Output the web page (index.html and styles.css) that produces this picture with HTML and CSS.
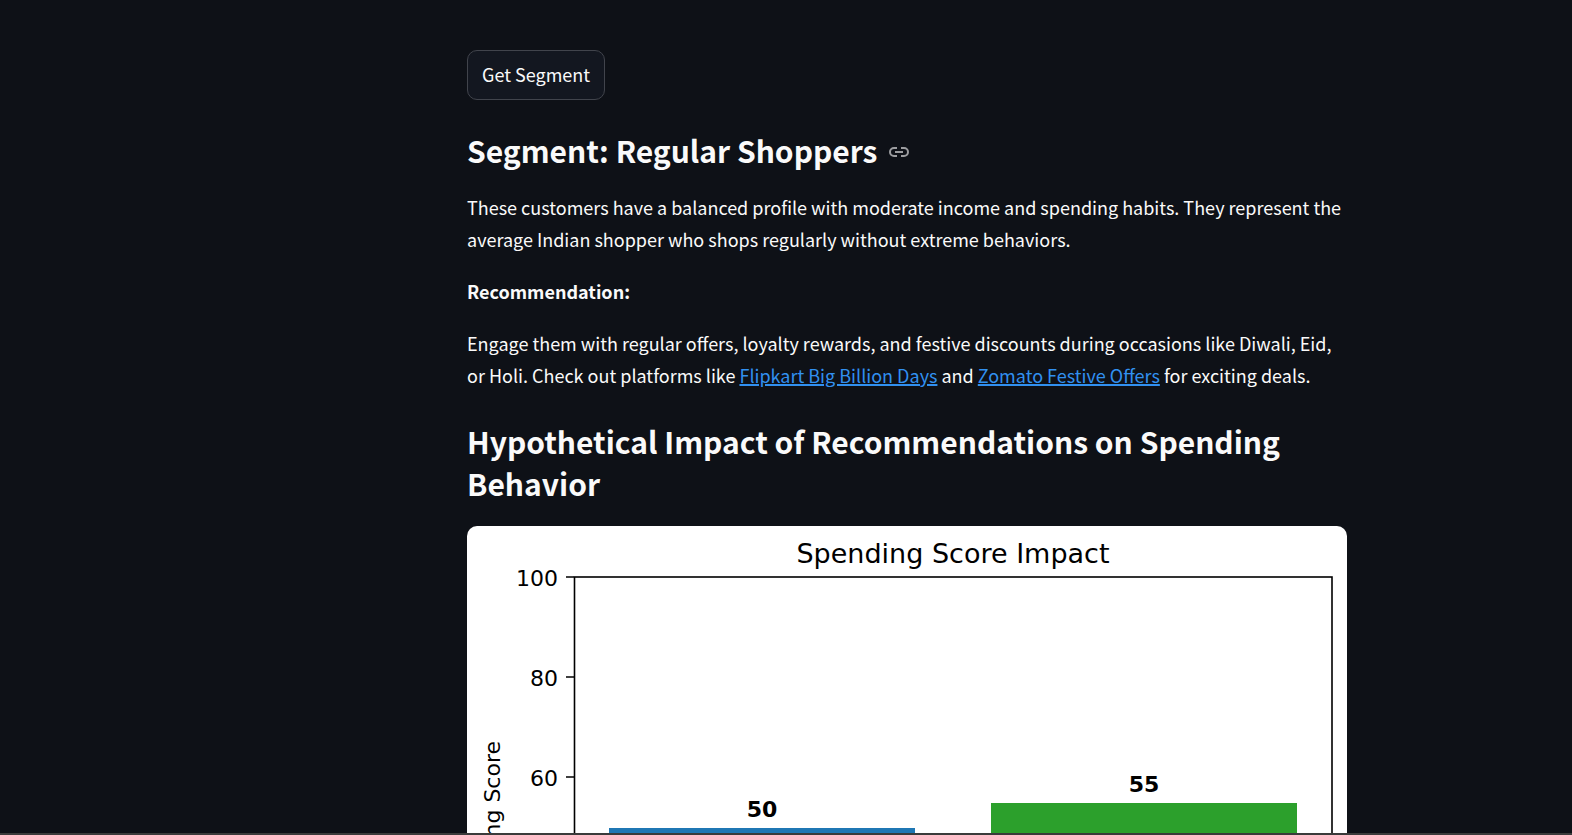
FILE: index.html
```html
<!DOCTYPE html>
<html lang="en">
<head>
<meta charset="utf-8">
<meta name="viewport" content="width=device-width, initial-scale=1">
<title>Customer Segments</title>
<link rel="stylesheet" href="styles.css">
</head>
<body>
<div class="app">
  <main class="content">
    <button class="button" type="button">Get Segment</button>
    <h2 class="heading heading-linked">Segment: Regular Shoppers
      <svg class="anchor-icon" viewBox="0 0 20 10" aria-hidden="true">
        <path d="M8 1H5a4 4 0 0 0 0 8h3M12 1h3a4 4 0 0 1 0 8h-3M6 5h8"/>
      </svg>
    </h2>
    <div class="prose">
      <p>These customers have a balanced profile with moderate income and spending habits. They represent the average Indian shopper who shops regularly without extreme behaviors.</p>
      <p><strong>Recommendation:</strong></p>
      <p>Engage them with regular offers, loyalty rewards, and festive discounts during occasions like Diwali, Eid, or Holi. Check out platforms like <a href="#flipkart">Flipkart Big Billion Days</a> and <a href="#zomato">Zomato Festive Offers</a> for exciting deals.</p>
    </div>
    <h2 class="heading">Hypothetical Impact of Recommendations on Spending Behavior</h2>
    <svg class="chart" viewBox="0 0 880 660" role="img" aria-label="Spending Score Impact">
      <text class="chart-title" x="486" y="37">Spending Score Impact</text>
      <text class="chart-label chart-axis" transform="translate(33 301) rotate(-90)">Spending Score</text>
      <rect class="bar-before" x="142" y="302" width="306" height="250"/>
      <rect class="bar-after" x="524" y="277" width="306" height="275"/>
      <rect class="frame" x="107.500" y="51" width="757.500" height="501"/>
      <path class="frame" d="M99 51h8M99 151h8M99 251h8"/>
      <text class="chart-label chart-tick" x="91" y="60">100</text>
      <text class="chart-label chart-tick" x="91" y="160">80</text>
      <text class="chart-label chart-tick" x="91" y="260">60</text>
      <text class="chart-label chart-value" x="295" y="291">50</text>
      <text class="chart-label chart-value" x="677" y="266">55</text>
    </svg>
  </main>
</div>
</body>
</html>
```
FILE: styles.css
```css
* {
  box-sizing: border-box;
}

body {
  margin: 0;
  background: #0e1117;
  color: #fafafa;
  font-family: "Noto Sans CJK JP", "Noto Sans", sans-serif;
  font-size: 18px;
  line-height: 32px;
}

.app {
  height: 100vh;
  overflow: hidden;
  padding: 50px 24px 0 266px;
  border-bottom: 2px solid #3a3b3b;
}

.content {
  display: flex;
  flex-direction: column;
  align-items: flex-start;
  max-width: 880px;
  margin: 0 auto;
}

.button {
  padding: 7px 14px 9px;
  border: 1px solid #41444c;
  border-radius: 10px;
  background: #131720;
  color: inherit;
  font: inherit;
}

.heading {
  margin: 29px 0 20px;
  font-size: 30px;
  font-weight: 700;
  line-height: 42px;
}

.heading-linked {
  display: flex;
  align-items: center;
  gap: 12px;
}

.anchor-icon {
  width: 20px;
  height: 10px;
  margin-top: 8px;
  margin-bottom: 4px;
  fill: none;
  stroke: #9c9da0;
  stroke-width: 2;
}

.prose p {
  margin: 0 0 20px;
}

.prose p:last-child {
  margin-bottom: 0;
}

.prose a {
  color: #3190f0;
  text-decoration-thickness: 2px;
}

.chart {
  display: block;
  width: 100%;
  margin-top: 2px;
  border-radius: 10px;
  background: #fff;
  font-family: "DejaVu Sans", sans-serif;
}

.chart-title {
  font-size: 27px;
  text-anchor: middle;
}

.chart-label {
  font-size: 22px;
}

.chart-axis,
.chart-value {
  text-anchor: middle;
}

.chart-tick {
  text-anchor: end;
}

.chart-value {
  font-weight: 700;
}

.frame {
  fill: none;
  stroke: #000;
  stroke-width: 1.6;
}

.bar-before {
  fill: #1f77b4;
}

.bar-after {
  fill: #2ca02c;
}
```
